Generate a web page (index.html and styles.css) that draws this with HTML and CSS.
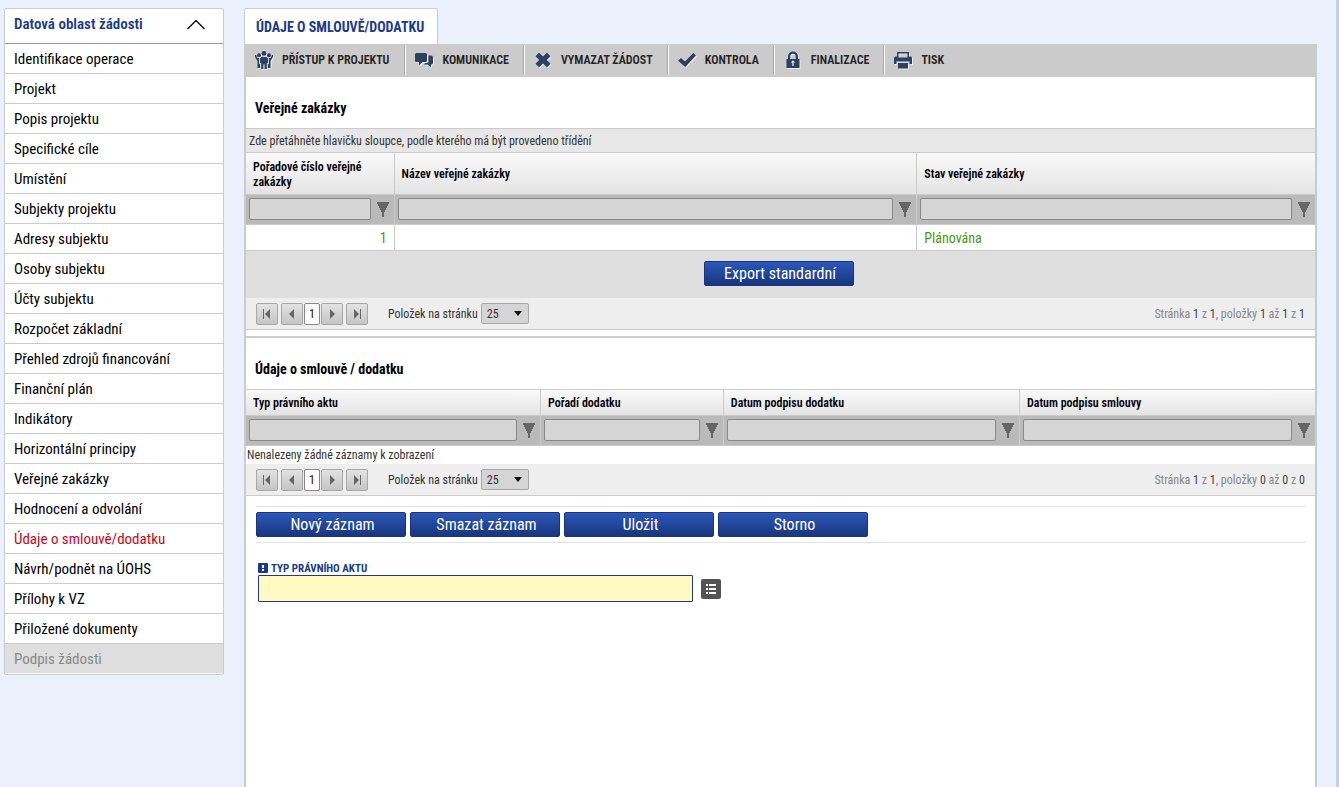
FILE: index.html
```html
<!DOCTYPE html>
<html lang="cs">
<head>
<meta charset="utf-8">
<title>Údaje o smlouvě/dodatku</title>
<link rel="stylesheet" href="styles.css">
</head>
<body>
<svg class="defs" aria-hidden="true">
  <symbol id="funnel" viewBox="0 0 12 15"><path d="M0 0h12v2h-1v2h-1v2H9v2H8v2H7v5H5v-5H4V8H3V6H2V4H1V2H0z"/></symbol>
  <symbol id="prev" viewBox="0 0 10 10"><path d="M7 0v10L2 5z"/></symbol>
  <symbol id="next" viewBox="0 0 10 10"><path d="M3 0v10l5-5z"/></symbol>
  <symbol id="first" viewBox="0 0 10 10"><path d="M1 0h1v10H1zM8 0v10L3 5z"/></symbol>
  <symbol id="last" viewBox="0 0 10 10"><path d="M8 0h1v10H8zM2 0v10l5-5z"/></symbol>
</svg>
<div class="page">
  <nav class="sidebar">
    <button class="sidebar-head" type="button">Datová oblast žádosti
      <svg width="18" height="11" viewBox="0 0 18 11"><path d="M.5 10 9 1.500l8.500 8.500" fill="none" stroke="#111" stroke-width="1.500"/></svg>
    </button>
    <ul>
      <li><a href="#">Identifikace operace</a></li>
      <li><a href="#">Projekt</a></li>
      <li><a href="#">Popis projektu</a></li>
      <li><a href="#">Specifické cíle</a></li>
      <li><a href="#">Umístění</a></li>
      <li><a href="#">Subjekty projektu</a></li>
      <li><a href="#">Adresy subjektu</a></li>
      <li><a href="#">Osoby subjektu</a></li>
      <li><a href="#">Účty subjektu</a></li>
      <li><a href="#">Rozpočet základní</a></li>
      <li><a href="#">Přehled zdrojů financování</a></li>
      <li><a href="#">Finanční plán</a></li>
      <li><a href="#">Indikátory</a></li>
      <li><a href="#">Horizontální principy</a></li>
      <li><a href="#">Veřejné zakázky</a></li>
      <li><a href="#">Hodnocení a odvolání</a></li>
      <li><a href="#" class="current">Údaje o smlouvě/dodatku</a></li>
      <li><a href="#">Návrh/podnět na ÚOHS</a></li>
      <li><a href="#">Přílohy k VZ</a></li>
      <li><a href="#">Přiložené dokumenty</a></li>
      <li><a href="#" class="disabled">Podpis žádosti</a></li>
    </ul>
  </nav>

  <main class="main">
    <h1 class="tab">ÚDAJE O SMLOUVĚ/DODATKU</h1>
    <div class="toolbar">
      <button type="button"><svg class="tool-icon" viewBox="0 0 18 18"><circle cx="9" cy="2.400" r="2.400"/><circle cx="4" cy="4.300" r="2"/><circle cx="14" cy="4.300" r="2"/><path d="M6.500 6h5l1.500 1.500V12h-1.200v6H9.600v-4.500H8.400V18H6.200v-6H5V7.500zM0 4h1l1.500 3h1.700v5.500h1V17H2.500v-7L0 6zM18 4h-1l-1.500 3h-1.700v5.500h-1V17h2.700v-7L18 6z"/><path d="M4.600 7v6M13.400 7v6" stroke="#cbcbcb"/></svg>PŘÍSTUP K PROJEKTU</button>
      <button type="button"><svg class="tool-icon" viewBox="0 0 18 18"><path d="M1.500 2h9q1.500 0 1.500 1.500v6q0 1.500-1.500 1.500H7.500L4 14.200V11H1.500Q0 11 0 9.500v-6Q0 2 1.500 2z"/><path d="M13.500 4.500h2.800q1.700 0 1.700 1.500v6q0 1.500-1.500 1.500H16v2.800l-3.500-2.800H8.700l1.800-1.500H12q1.500 0 1.500-1.500z"/></svg>KOMUNIKACE</button>
      <button type="button"><svg class="tool-icon" viewBox="0 0 18 18"><path d="M1.500 5.200 5 1.700l4 3.800 4-3.800 3.500 3.500L12.800 9l3.700 3.800-3.500 3.500-4-3.800-4 3.800-3.500-3.500L5.200 9z"/></svg>VYMAZAT ŽÁDOST</button>
      <button type="button"><svg class="tool-icon" viewBox="0 0 18 18"><path d="M0 9.800 3 7l4 3.500L15.300 2 18 4.600 7.200 16z"/></svg>KONTROLA</button>
      <button type="button"><svg class="tool-icon" viewBox="0 0 18 18"><path fill-rule="evenodd" d="M2.500 8H4V5.500a5 5 0 0 1 10 0V8h1.500v9H2.500zM6.300 8h5.400V5.500a2.700 2.700 0 0 0-5.400 0zM9 9.500q-1.500 0-1.500 1.500v1h.8v3h1.400v-3h.8v-1q0-1.500-1.500-1.500z"/></svg>FINALIZACE</button>
      <button type="button"><svg class="tool-icon" viewBox="0 0 18 18"><path fill-rule="evenodd" d="M3 1h12v4.500h1.500Q18 5.500 18 7v6h-2.500v-2.500h-13V13H0V7q0-1.500 1.500-1.500H3zm1.500 1.500V6.500h9v-4z"/><path d="M4 12h10v5.500H4z"/></svg>TISK</button>
    </div>

    <div class="content">
      <section class="grid-section">
        <h2>Veřejné zakázky</h2>
        <div class="group-bar">Zde přetáhněte hlavičku sloupce, podle kterého má být provedeno třídění</div>
        <table class="grid orders">
          <colgroup><col class="order-no"><col class="order-name"><col></colgroup>
          <thead>
            <tr><th>Pořadové číslo veřejné zakázky</th><th>Název veřejné zakázky</th><th>Stav veřejné zakázky</th></tr>
            <tr class="filters">
              <td><div class="filter"><input type="text" aria-label="Pořadové číslo veřejné zakázky"><button type="button" aria-label="Filtr"><svg><use href="#funnel"/></svg></button></div></td>
              <td><div class="filter"><input type="text" aria-label="Název veřejné zakázky"><button type="button" aria-label="Filtr"><svg><use href="#funnel"/></svg></button></div></td>
              <td><div class="filter"><input type="text" aria-label="Stav veřejné zakázky"><button type="button" aria-label="Filtr"><svg><use href="#funnel"/></svg></button></div></td>
            </tr>
          </thead>
          <tbody><tr class="record"><td class="number">1</td><td></td><td>Plánována</td></tr></tbody>
        </table>
        <div class="export"><button class="primary" type="button">Export standardní</button></div>
        <div class="pager">
          <button type="button" aria-label="První"><svg><use href="#first"/></svg></button>
          <button type="button" aria-label="Předchozí"><svg><use href="#prev"/></svg></button>
          <button type="button" class="page-no">1</button>
          <button type="button" aria-label="Další"><svg><use href="#next"/></svg></button>
          <button type="button" class="to-last" aria-label="Poslední"><svg><use href="#last"/></svg></button>
          <label for="size1">Položek na stránku</label>
          <span class="select"><select id="size1"><option>25</option></select></span>
          <p>Stránka <b>1</b> z <b>1</b>, položky <b>1</b> až <b>1</b> z <b>1</b></p>
        </div>
      </section>

      <section class="grid-section second">
        <h2>Údaje o smlouvě / dodatku</h2>
        <table class="grid contracts">
          <colgroup><col class="act-type"><col class="act-order"><col class="act-date"><col></colgroup>
          <thead>
            <tr><th>Typ právního aktu</th><th>Pořadí dodatku</th><th>Datum podpisu dodatku</th><th>Datum podpisu smlouvy</th></tr>
            <tr class="filters">
              <td><div class="filter"><input type="text" aria-label="Typ právního aktu"><button type="button" aria-label="Filtr"><svg><use href="#funnel"/></svg></button></div></td>
              <td><div class="filter"><input type="text" aria-label="Pořadí dodatku"><button type="button" aria-label="Filtr"><svg><use href="#funnel"/></svg></button></div></td>
              <td><div class="filter"><input type="text" aria-label="Datum podpisu dodatku"><button type="button" aria-label="Filtr"><svg><use href="#funnel"/></svg></button></div></td>
              <td><div class="filter"><input type="text" aria-label="Datum podpisu smlouvy"><button type="button" aria-label="Filtr"><svg><use href="#funnel"/></svg></button></div></td>
            </tr>
          </thead>
          <tbody><tr class="empty"><td colspan="4">Nenalezeny žádné záznamy k zobrazení</td></tr></tbody>
        </table>
        <div class="pager">
          <button type="button" aria-label="První"><svg><use href="#first"/></svg></button>
          <button type="button" aria-label="Předchozí"><svg><use href="#prev"/></svg></button>
          <button type="button" class="page-no">1</button>
          <button type="button" aria-label="Další"><svg><use href="#next"/></svg></button>
          <button type="button" class="to-last" aria-label="Poslední"><svg><use href="#last"/></svg></button>
          <label for="size2">Položek na stránku</label>
          <span class="select"><select id="size2"><option>25</option></select></span>
          <p>Stránka <b>1</b> z <b>1</b>, položky <b>0</b> až <b>0</b> z <b>0</b></p>
        </div>
      </section>

      <form class="detail">
        <div class="actions">
          <button class="primary" type="button">Nový záznam</button>
          <button class="primary" type="button">Smazat záznam</button>
          <button class="primary" type="button">Uložit</button>
          <button class="primary" type="button">Storno</button>
        </div>
        <div class="field">
          <label for="act"><svg width="10" height="10" viewBox="0 0 10 10"><rect width="10" height="10" rx="1" fill="#19398a"/><path d="M4 2h2v3H4zM4 6h2v2H4z" fill="#fff"/></svg>TYP PRÁVNÍHO AKTU</label>
          <div class="field-row">
            <input id="act" type="text">
            <button type="button" aria-label="Vybrat ze seznamu"><svg width="20" height="20" viewBox="0 0 20 20"><rect width="20" height="20" rx="2" fill="#545454"/><path d="M5 5h2v2H5zm3 0h7v2H8zM5 9h2v2H5zm3 0h7v2H8zM5 13h2v2H5zm3 0h7v2H8z" fill="#fff"/></svg></button>
          </div>
        </div>
      </form>
    </div>
  </main>
</div>
</body>
</html>
```
FILE: styles.css
```css
* { box-sizing: border-box; }

body {
  margin: 0;
  background: #ecf0fd;
  color: #333;
  font-family: "Roboto Condensed", "Liberation Sans Narrow", Roboto, sans-serif;
  font-size: 12px;
}

button, input, select { font: inherit; color: inherit; margin: 0; }
button { border: 0; padding: 0; background: none; }
h1, h2, p, ul { margin: 0; padding: 0; }
ul { list-style: none; }
.defs { display: none; }

.page {
  display: flex;
  align-items: flex-start;
  gap: 20px;
  min-height: 100vh;
  padding: 8px 19px 0 4px;
  border-right: 3px solid #c6cfe8;
}

.sidebar {
  flex: 0 0 220px;
  background: #fff;
  border: 1px solid #cbcbcb;
  border-radius: 2px;
  padding-bottom: 1px;
  font-size: 15px;
}
.sidebar-head {
  display: flex;
  align-items: center;
  justify-content: space-between;
  width: 100%;
  height: 35px;
  padding: 0 18px 4px 9px;
  border-bottom: 1px solid #999;
  color: #1b3a8c;
  font-size: 15px;
  font-weight: 600;
}
.sidebar a {
  display: block;
  height: 30px;
  padding-left: 9px;
  border-bottom: 1px solid #cbcbcb;
  line-height: 30px;
  color: #000;
  text-decoration: none;
}
.sidebar a.current { color: #d0021b; }
.sidebar a.disabled { height: 29px; border: 0; background: #dedede; color: #888; }

.main {
  flex: 1;
  min-width: 0;
  display: flex;
  flex-direction: column;
  align-self: stretch;
}
.tab {
  align-self: flex-start;
  height: 36px;
  padding: 0 13px 0 11px;
  border: 1px solid #cbcbcb;
  border-bottom: 0;
  border-radius: 2px 2px 0 0;
  background: #fff;
  color: #1b3a8c;
  font-size: 14px;
  font-weight: bold;
  line-height: 36px;
}
.toolbar {
  display: flex;
  height: 33px;
  padding: 1px 0 2px 1px;
  background: #cbcbcb;
}
.toolbar button {
  display: flex;
  align-items: center;
  gap: 9px;
  padding: 0 14px 0 9px;
  border-left: 1px solid #fff;
  border-right: 1px solid #a8a8a8;
  color: #222;
  font-weight: 600;
}
.toolbar button:first-child { padding-right: 15px; border-left-color: #cbcbcb; }
.toolbar button:last-child { border-right: 0; }
.tool-icon {
  width: 18px;
  height: 18px;
  fill: #2d3f62;
  filter: drop-shadow(1px 1px 0 #eee);
}

.content {
  flex: 1;
  border: solid #cbcbcb;
  border-width: 0 2px;
  background: #fff;
}
h2 {
  height: 51px;
  padding: 6px 9px 0;
  color: #000;
  font-size: 14px;
  line-height: 51px;
  font-weight: bold;
}
.second { margin-top: 6px; border-top: 2px solid #cbcbcb; }
.group-bar {
  height: 24px;
  padding-left: 3px;
  border-top: 1px solid #cbcbcb;
  background: #e7e7e7;
  line-height: 24px;
}

.grid {
  width: 100%;
  table-layout: fixed;
  border-collapse: separate;
  border-spacing: 0;
  border-top: 1px solid #cbcbcb;
}
.order-no { width: 13.9%; }
.order-name { width: 48.9%; }
.act-type { width: 27.6%; }
.act-order { width: 17.1%; }
.act-date { width: 27.7%; }
.grid th, .grid td {
  padding: 0;
  border-right: 1px solid #cbcbcb;
  border-bottom: 1px solid #cbcbcb;
}
.grid tr > :last-child { border-right: 0; }
.grid th {
  height: 26px;
  padding: 2px 7px 0;
  background: linear-gradient(#f9f9f9, #e4e4e4);
  color: #000;
  font-weight: 600;
  line-height: 15px;
  text-align: left;
}
.orders th { height: 42px; }
.grid .filters td { height: 30px; padding-bottom: 1px; background: #bababa; }
.filter { display: flex; align-items: center; gap: 6px; padding: 0 5px 0 3px; }
.filter input {
  flex: 1;
  min-width: 0;
  height: 22px;
  padding: 0 4px;
  border: 1px solid #888;
  border-radius: 2px;
  background: #d5d5d5;
}
.filter button, .filter svg { display: block; width: 12px; height: 15px; fill: #666; }
.grid .record td { height: 26px; padding: 0 7px; color: #449b12; font-size: 14px; }
.record .number { text-align: right; }
.grid .empty td { height: 18px; padding-left: 1px; border: 0; line-height: 18px; }

.export { display: flex; justify-content: center; padding: 10px 4px 12px 0; background: #dfdfdf; }
.primary {
  width: 150px;
  height: 25px;
  padding-left: 3px;
  border: 1px solid #19357d;
  border-radius: 2px;
  background: linear-gradient(#2b58bb, #19357d);
  color: #fff;
  font-size: 16px;
}

.pager {
  display: flex;
  align-items: center;
  height: 32px;
  padding: 0 10px;
  border-bottom: 1px solid #cbcbcb;
  background: #eee;
}
.pager button {
  display: grid;
  place-items: center;
  width: 22px;
  height: 22px;
  margin-right: 3px;
  border: 1px solid #a8a8a8;
  border-radius: 2px;
  background: linear-gradient(#e2e2e2, #c4c4c4);
}
.pager button:nth-child(2) { margin-right: 1px; }
.pager button.page-no { width: 16px; margin-right: 1px; border-color: #888; background: #fff; color: #111; }
.pager button.to-last { margin-right: 20px; }
.pager button svg { width: 10px; height: 10px; fill: #666; }
.select { display: flex; position: relative; margin-left: 3px; }
.select::after {
  content: "";
  position: absolute;
  top: 8px;
  right: 7px;
  border: solid transparent;
  border-width: 5px 4px 0;
  border-top-color: #111;
  pointer-events: none;
}
.select select {
  appearance: none;
  width: 48px;
  height: 21px;
  padding: 0 5px;
  border: 1px solid #a8a8a8;
  border-radius: 2px;
  background: #d5d5d5;
}
.pager p { margin-left: auto; color: #888; }
.pager b { color: #444; font-weight: normal; }

.detail { padding: 10px 9px 0 10px; }
.actions { display: flex; gap: 4px; padding: 5px 0; border: solid #e2e2e2; border-width: 1px 0; }
.field { padding: 18px 2px 0; }
.field label {
  display: flex;
  align-items: center;
  gap: 3px;
  height: 14px;
  color: #19398a;
  font-size: 11px;
  font-weight: bold;
}
.field-row { display: flex; align-items: center; gap: 8px; }
.field-row input {
  flex: 0 1 435px;
  min-width: 0;
  height: 27px;
  padding: 0 5px;
  border: 1px solid #19398a;
  border-radius: 1px;
  background: #fffac2;
}
.field-row svg { display: block; }
```
